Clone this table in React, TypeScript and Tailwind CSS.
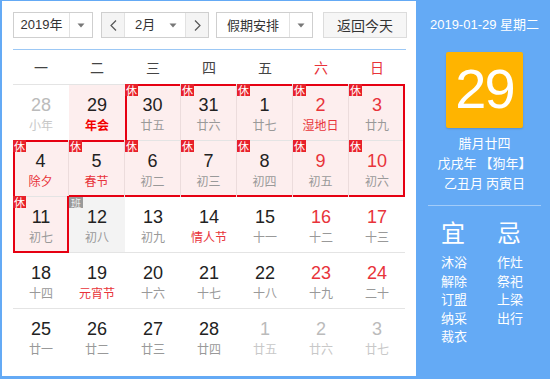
type Day = {
  d: number;
  l: string;
  h?: boolean; // 休
  w?: boolean; // weekend red number
  o?: boolean; // other month
  f?: boolean; // festival red text
  fb?: boolean; // bold festival
  today?: boolean;
  ban?: boolean; // 班
};

const rows: Day[][] = [
  [
    { d: 28, l: "小年", o: true },
    { d: 29, l: "年会", f: true, fb: true, today: true },
    { d: 30, l: "廿五", h: true },
    { d: 31, l: "廿六", h: true },
    { d: 1, l: "廿七", h: true },
    { d: 2, l: "湿地日", h: true, w: true, f: true },
    { d: 3, l: "廿九", h: true, w: true },
  ],
  [
    { d: 4, l: "除夕", h: true, f: true },
    { d: 5, l: "春节", h: true, f: true },
    { d: 6, l: "初二", h: true },
    { d: 7, l: "初三", h: true },
    { d: 8, l: "初四", h: true },
    { d: 9, l: "初五", h: true, w: true },
    { d: 10, l: "初六", h: true, w: true },
  ],
  [
    { d: 11, l: "初七", h: true },
    { d: 12, l: "初八", ban: true },
    { d: 13, l: "初九" },
    { d: 14, l: "情人节", f: true },
    { d: 15, l: "十一" },
    { d: 16, l: "十二", w: true },
    { d: 17, l: "十三", w: true },
  ],
  [
    { d: 18, l: "十四" },
    { d: 19, l: "元宵节", f: true },
    { d: 20, l: "十六" },
    { d: 21, l: "十七" },
    { d: 22, l: "十八" },
    { d: 23, l: "十九", w: true },
    { d: 24, l: "二十", w: true },
  ],
  [
    { d: 25, l: "廿一" },
    { d: 26, l: "廿二" },
    { d: 27, l: "廿三" },
    { d: 28, l: "廿四" },
    { d: 1, l: "廿五", o: true },
    { d: 2, l: "廿六", o: true },
    { d: 3, l: "廿七", o: true },
  ],
];

const isH = (r: number, c: number) => !!rows[r]?.[c]?.h;

function Caret() {
  return (
    <svg width="8" height="5" viewBox="0 0 8 5">
      <path d="M0.5 0.5 L7.5 0.5 L4 4.5 Z" fill="#777" />
    </svg>
  );
}

function Chevron({ dir }: { dir: "l" | "r" }) {
  return (
    <svg width="7" height="11" viewBox="0 0 7 11">
      <path
        d={dir === "l" ? "M6 0.5 L1 5.5 L6 10.5" : "M1 0.5 L6 5.5 L1 10.5"}
        fill="none"
        stroke="#555"
        strokeWidth="1.2"
      />
    </svg>
  );
}

function DayCell({ day, r, c }: { day: Day; r: number; c: number }) {
  const bg = day.h || day.today ? "bg-[#fdeeee]" : day.ban ? "bg-[#f3f3f3]" : "";
  const sep = day.h && isH(r, c + 1) ? "border-r border-[#ecdcdc]" : "";
  const numColor = day.o ? "text-[#bbbbbb]" : day.w ? "text-[#e8333a]" : "text-[#222222]";
  const lunarColor = day.o
    ? "text-[#c8c8c8]"
    : day.fb
      ? "text-[#f20000] font-bold"
      : day.f
        ? "text-[#e8333a]"
        : "text-[#999999]";

  const bt = day.h && !isH(r - 1, c) ? "border-t-2" : "";
  const bb = day.h && !isH(r + 1, c) ? "border-b-2" : "";
  const bl = day.h && !isH(r, c - 1) ? "border-l-2" : "";
  const br = day.h && !isH(r, c + 1) ? "border-r-2" : "";

  return (
    <div className={`relative w-[56px] h-full flex flex-col items-center pt-[9px] ${bg} ${sep}`}>
      {day.h && (
        <span
          className={`absolute -top-px left-0 right-0 -bottom-px border-[#e60012] pointer-events-none ${bt} ${bb} ${bl} ${br}`}
        />
      )}
      {day.h && (
        <span className="absolute -top-px left-0 z-10 w-[13px] h-[12px] bg-[#e8202a] text-white text-[11px] leading-[12px] text-center font-['Noto_Sans_CJK_SC',sans-serif]">
          休
        </span>
      )}
      {day.ban && (
        <span className="absolute top-0 left-0 z-10 w-[14px] h-[11px] bg-[#9a9a9a] text-[#eeeeee] text-[10px] leading-[11px] text-center font-['Noto_Sans_CJK_SC',sans-serif]">
          班
        </span>
      )}
      <span className={`text-[18px] leading-[22px] font-['Liberation_Sans',sans-serif] ${numColor}`}>
        {day.d}
      </span>
      <span className={`text-[12px] leading-[16px] mt-[1px] font-['Noto_Sans_CJK_SC',sans-serif] ${lunarColor}`}>
        {day.l}
      </span>
    </div>
  );
}

export default function App() {
  const weekdays = ["一", "二", "三", "四", "五", "六", "日"];
  const yi = ["沐浴", "解除", "订盟", "纳采", "裁衣"];
  const ji = ["作灶", "祭祀", "上梁", "出行"];

  return (
    <div className="w-[550px] h-[379px] flex border-[#64aaf5] border-t border-l-2 border-b-[3px] bg-white font-['Liberation_Sans','Noto_Sans_CJK_SC',sans-serif] overflow-hidden">
      {/* calendar */}
      <div className="w-[414px] shrink-0 pl-[11px] pt-[11px]">
        <div className="flex h-[26px] text-[13px] text-[#333333] font-['Noto_Sans_CJK_SC',sans-serif]">
          <div className="w-[80px] flex border border-[#cfcfcf] bg-white">
            <div className="w-[55px] flex items-center justify-center font-['Liberation_Sans','Noto_Sans_CJK_SC',sans-serif]">
              2019年
            </div>
            <div className="flex-1 flex items-center justify-center border-l border-[#e2e2e2]">
              <Caret />
            </div>
          </div>
          <div className="ml-[8px] w-[108px] flex border border-[#cfcfcf]">
            <div className="w-[23px] flex items-center justify-center bg-[#f4f4f4] border-r border-[#e2e2e2]">
              <Chevron dir="l" />
            </div>
            <div className="flex-1 flex items-center pl-[10px] pr-[8px] justify-between bg-white">
              <span className="font-['Liberation_Sans','Noto_Sans_CJK_SC',sans-serif]">2月</span>
              <Caret />
            </div>
            <div className="w-[23px] flex items-center justify-center bg-[#f4f4f4] border-l border-[#e2e2e2]">
              <Chevron dir="r" />
            </div>
          </div>
          <div className="ml-[7px] w-[97px] flex border border-[#cfcfcf] bg-white">
            <div className="w-[72px] flex items-center justify-center">假期安排</div>
            <div className="flex-1 flex items-center justify-center border-l border-[#e2e2e2]">
              <Caret />
            </div>
          </div>
          <div className="ml-[10px] w-[84px] flex items-center justify-center border border-[#dcdcdc] bg-[#f6f6f6] text-[14px]">
            返回今天
          </div>
        </div>

        <div className="mt-[11px] w-[393px] h-px bg-[#9cc8f5]" />

        <div className="w-[392px] h-[34px] flex items-center text-[14px] font-['Noto_Sans_CJK_SC',sans-serif]">
          {weekdays.map((w, i) => (
            <div
              key={w}
              className={`w-[56px] text-center ${i >= 5 ? "text-[#e8333a]" : "text-[#444444]"}`}
            >
              {w}
            </div>
          ))}
        </div>

        <div className="w-[392px]">
          {rows.map((row, r) => (
            <div key={r} className="h-[56px] flex border-t border-[#e4e4e4]">
              {row.map((day, c) => (
                <DayCell key={c} day={day} r={r} c={c} />
              ))}
            </div>
          ))}
        </div>
      </div>

      {/* side panel */}
      <div className="flex-1 bg-[#64aaf5] text-white flex flex-col items-center pt-[16px]">
        <div className="text-[13px] leading-[16px]">2019-01-29 星期二</div>
        <div className="mt-[19px] w-[77px] h-[76px] rounded-[2px] bg-[#ffb400] shadow-[0_1px_2px_rgba(0,0,0,0.15)] flex items-center justify-center">
          <span className="text-[56px] leading-none tracking-[-2px] font-['Liberation_Sans',sans-serif] mt-[-2px]">
            29
          </span>
        </div>
        <div className="mt-[5px] text-[13px] leading-[20px] text-center font-['Noto_Sans_CJK_SC',sans-serif]">
          <div>腊月廿四</div>
          <div>戊戌年 【狗年】</div>
          <div>乙丑月 丙寅日</div>
        </div>
        <div className="mt-[12px] w-[113px] h-px bg-white/40" />
        <div className="w-full flex pl-[25px] mt-[14px] font-['Noto_Sans_CJK_SC',sans-serif]">
          <div className="w-[56px] flex flex-col items-start">
            <div className="text-[24px] leading-[24px] mb-[9px]">宜</div>
            {yi.map((t) => (
              <div key={t} className="text-[13px] leading-[18.5px]">
                {t}
              </div>
            ))}
          </div>
          <div className="w-[56px] flex flex-col items-start">
            <div className="text-[24px] leading-[24px] mb-[9px]">忌</div>
            {ji.map((t) => (
              <div key={t} className="text-[13px] leading-[18.5px]">
                {t}
              </div>
            ))}
          </div>
        </div>
      </div>
    </div>
  );
}
